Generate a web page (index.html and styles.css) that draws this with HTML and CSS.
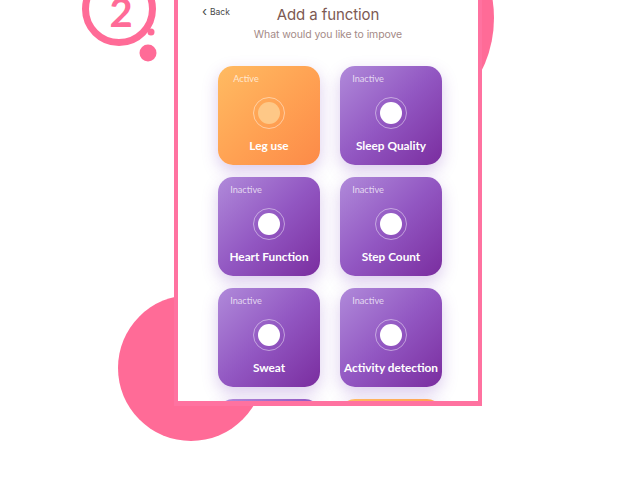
FILE: index.html
```html
<!DOCTYPE html>
<html>
<head>
<meta charset="utf-8">
<link rel="stylesheet" href="styles.css">
</head>
<body>
<div class="stage">
  <div class="blob blob-top"></div>
  <div class="blob blob-bottom"></div>
  <svg class="logo" width="100" height="70" viewBox="70 0 100 70">
    <circle cx="119" cy="9" r="33.5" fill="none" stroke="#ff6b97" stroke-width="7"/>
    <circle cx="151" cy="32" r="3.5" fill="#ff6b97"/>
    <circle cx="148" cy="53" r="8.5" fill="#ff6b97"/>
    <text x="121" y="27" text-anchor="middle" class="logo-num">2</text>
  </svg>
  <div class="phone">
    <div class="header">
      <a class="back"><span class="chev">‹</span>Back</a>
      <div class="titles">
        <h1 class="title">Add a function</h1>
        <p class="subtitle">What would you like to impove</p>
      </div>
    </div>
    <div class="grid">
      <div class="card active">
        <span class="state">Active</span>
        <span class="dot"><span class="dot-in"></span></span>
        <span class="name">Leg use</span>
      </div>
      <div class="card">
        <span class="state">Inactive</span>
        <span class="dot"><span class="dot-in"></span></span>
        <span class="name">Sleep Quality</span>
      </div>
      <div class="card">
        <span class="state">Inactive</span>
        <span class="dot"><span class="dot-in"></span></span>
        <span class="name">Heart Function</span>
      </div>
      <div class="card">
        <span class="state">Inactive</span>
        <span class="dot"><span class="dot-in"></span></span>
        <span class="name">Step Count</span>
      </div>
      <div class="card">
        <span class="state">Inactive</span>
        <span class="dot"><span class="dot-in"></span></span>
        <span class="name">Sweat</span>
      </div>
      <div class="card">
        <span class="state">Inactive</span>
        <span class="dot"><span class="dot-in"></span></span>
        <span class="name">Activity detection</span>
      </div>
      <div class="card"></div>
      <div class="card active"></div>
    </div>
  </div>
</div>
</body>
</html>
```
FILE: styles.css
```css
* { box-sizing: border-box; }
html, body { margin: 0; padding: 0; background: #ffffff; }
.stage {
  position: relative;
  width: 620px;
  height: 500px;
  overflow: hidden;
  font-family: "Lato", "Liberation Sans", sans-serif;
}
.blob {
  position: absolute;
  border-radius: 50%;
  background: #ff6b97;
}
.blob-top { left: 256px; top: -101px; width: 238px; height: 238px; }
.blob-bottom { left: 118px; top: 295px; width: 146px; height: 146px; }
.logo { position: absolute; left: 70px; top: 0; }
.logo-num {
  font-family: "Lato", sans-serif;
  font-weight: 700;
  font-size: 40px;
  fill: #ff6b97;
}
.phone {
  position: absolute;
  left: 174px;
  top: 0;
  width: 308px;
  height: 406px;
  background: #ffffff;
  border: 4px solid #ff72a0;
  border-top: 0;
  border-bottom-width: 5px;
  overflow: hidden;
}
.header {
  position: relative;
  padding-top: 5px;
  height: 66px;
}
.back {
  position: absolute;
  left: 24px;
  top: 7px;
  font-family: "Inter", "Liberation Sans", sans-serif;
  font-size: 8.5px;
  color: #4a4a4a;
  display: flex;
  align-items: center;
  gap: 3px;
}
.chev { font-size: 13px; line-height: 12px; margin-top: -2px; }
.titles { text-align: center; }
.title {
  margin: 0;
  font-family: "Inter", "Liberation Sans", sans-serif;
  font-weight: 400;
  font-size: 15px;
  line-height: 20px;
  color: #7d5a53;
  letter-spacing: -0.1px;
}
.subtitle {
  margin: 3px 0 0;
  font-family: "Inter", "Liberation Sans", sans-serif;
  font-size: 10.5px;
  line-height: 14px;
  color: #a48a87;
  letter-spacing: -0.1px;
}
.grid {
  display: grid;
  grid-template-columns: 102px 102px;
  grid-auto-rows: 99px;
  gap: 12px 20px;
  padding-left: 40px;
}
.card {
  display: flex;
  flex-direction: column;
  align-items: center;
  border-radius: 15px;
  background: linear-gradient(135deg, #b08ada 0%, #9257c2 50%, #7a2d9f 100%);
  box-shadow: 0 6px 16px rgba(126, 70, 190, 0.28);
  padding-top: 7px;
  color: #ffffff;
}
.card.active {
  background: linear-gradient(135deg, #ffbb62 0%, #ffa052 55%, #fc8a48 100%);
}
.state {
  align-self: flex-start;
  width: 56px;
  text-align: center;
  font-size: 9.2px;
  line-height: 11px;
  color: rgba(255, 255, 255, 0.72);
}
.dot {
  margin-top: 13px;
  width: 32px;
  height: 32px;
  border-radius: 50%;
  border: 1.5px solid rgba(255, 255, 255, 0.45);
  display: flex;
  align-items: center;
  justify-content: center;
}
.dot-in {
  width: 22px;
  height: 22px;
  border-radius: 50%;
  background: #ffffff;
}
.active .dot-in { background: #fec887; }
.name {
  margin-top: 10px;
  font-weight: 700;
  font-size: 11.8px;
  line-height: 14px;
  white-space: nowrap;
}
```
